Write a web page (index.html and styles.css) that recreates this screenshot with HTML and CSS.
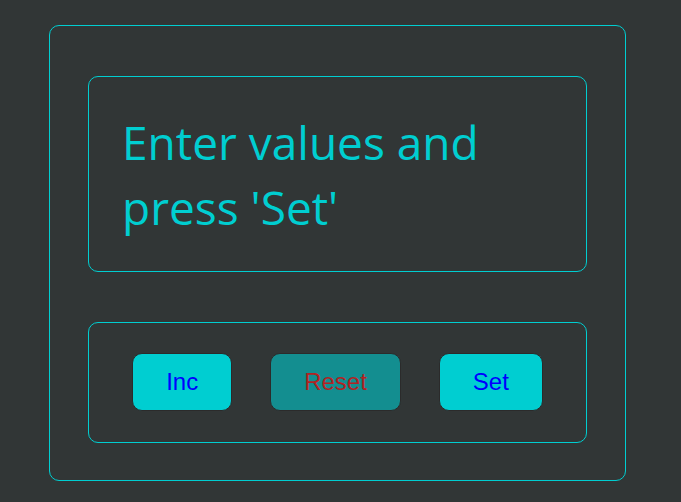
FILE: index.html
```html
<!DOCTYPE html>
<html lang="en">
<head>
<meta charset="utf-8">
<title>Counter</title>
<link rel="stylesheet" href="styles.css">
</head>
<body>
  <div class="panel">
    <div class="display">
      <p class="message">Enter values and press 'Set'</p>
    </div>
    <div class="controls">
      <button class="btn btn-inc">Inc</button>
      <button class="btn btn-reset">Reset</button>
      <button class="btn btn-set">Set</button>
    </div>
  </div>
</body>
</html>
```

FILE: styles.css
```css
html, body {
  margin: 0;
  padding: 0;
  background: #313636;
}

body {
  padding: 25px 0 0 49px;
  width: 577px;
}

.panel {
  border: 1px solid #00ced1;
  border-radius: 10px;
  padding: 50px 38px 37px;
  display: flex;
  flex-direction: column;
  gap: 50px;
}

.display {
  border: 1px solid #00ced1;
  border-radius: 10px;
  padding: 33px 30px 31px 33px;
}

.message {
  margin: 0;
  font-family: "Open Sans", "Noto Sans", sans-serif;
  font-size: 46px;
  color: #00ced1;
  line-height: 65px;
}

.controls {
  border: 1px solid #00ced1;
  border-radius: 10px;
  padding: 30px 0 31px;
  display: flex;
  justify-content: center;
  gap: 38px;
}

.btn {
  box-sizing: border-box;
  height: 58px;
  padding: 0 33px;
  border: 1px solid #2b2b2b;
  border-radius: 10px;
  background: #00ced1;
  color: #0000ff;
  font-family: "Liberation Sans", Arial, sans-serif;
  font-size: 24px;
}

.btn-reset {
  background: #138e90;
  color: #b22222;
}
```
